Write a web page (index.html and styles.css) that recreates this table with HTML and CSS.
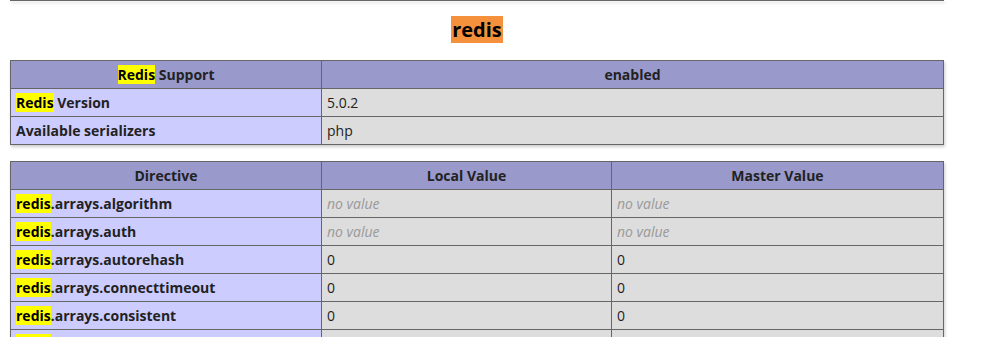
FILE: index.html
```html
<!DOCTYPE html>
<html>
<head>
<meta charset="utf-8">
<link rel="stylesheet" href="styles.css">
</head>
<body>
<div class="page">
  <div class="prev"></div>
  <h2 class="title"><span class="find-active">redis</span></h2>
  <table class="info">
    <tr class="h"><th class="c1"><mark>Redis</mark> Support</th><th>enabled</th></tr>
    <tr><td class="e"><mark>Redis</mark> Version</td><td class="v">5.0.2</td></tr>
    <tr><td class="e">Available serializers</td><td class="v">php</td></tr>
  </table>
  <table class="info">
    <tr class="h"><th class="c1">Directive</th><th class="c2">Local Value</th><th>Master Value</th></tr>
    <tr><td class="e"><mark>redis</mark>.arrays.algorithm</td><td class="v"><i>no value</i></td><td class="v"><i>no value</i></td></tr>
    <tr><td class="e"><mark>redis</mark>.arrays.auth</td><td class="v"><i>no value</i></td><td class="v"><i>no value</i></td></tr>
    <tr><td class="e"><mark>redis</mark>.arrays.autorehash</td><td class="v">0</td><td class="v">0</td></tr>
    <tr><td class="e"><mark>redis</mark>.arrays.connecttimeout</td><td class="v">0</td><td class="v">0</td></tr>
    <tr><td class="e"><mark>redis</mark>.arrays.consistent</td><td class="v">0</td><td class="v">0</td></tr>
    <tr><td class="e"><mark>redis</mark>.arrays.distributor</td><td class="v"><i>no value</i></td><td class="v"><i>no value</i></td></tr>
  </table>
</div>
</body>
</html>
```
FILE: styles.css
```css
html, body {
  margin: 0;
  padding: 0;
  background: #fff;
  overflow: hidden;
}
body {
  color: #222;
  font-family: "Open Sans", "Noto Sans", sans-serif;
}
.page {
  width: 934px;
  margin-left: 10px;
}
.prev {
  height: 0;
  border-bottom: 1px solid #666;
  box-shadow: 1px 2px 3px #ccc;
}
.title {
  margin: 16px 0 0;
  text-align: center;
  font-size: 20px;
  font-weight: bold;
  line-height: 26px;
  height: 26px;
}
.find-active {
  background: #f5913c;
  color: #000;
  padding: 0 1px;
}
mark {
  display: inline-block;
  line-height: 19px;
  background: #ffff00;
  color: #000;
}
.info {
  border-collapse: collapse;
  width: 934px;
  box-shadow: 1px 2px 3px #ccc;
  margin-top: 17px;
  font-size: 14px;
}
.info + .info {
  margin-top: 16px;
}
th, td {
  border: 1px solid #666;
  padding: 4px 5px;
  height: 19px;
  line-height: 19px;
  box-sizing: content-box;
  text-align: left;
  vertical-align: middle;
}
th {
  text-align: center;
  font-weight: bold;
}
.h th {
  background: #99c;
}
.c1 {
  width: 300px;
}
.c2 {
  width: 279px;
}
.e {
  background: #ccf;
  font-weight: bold;
}
.v {
  background: #ddd;
}
.v i {
  color: #999;
}
```
